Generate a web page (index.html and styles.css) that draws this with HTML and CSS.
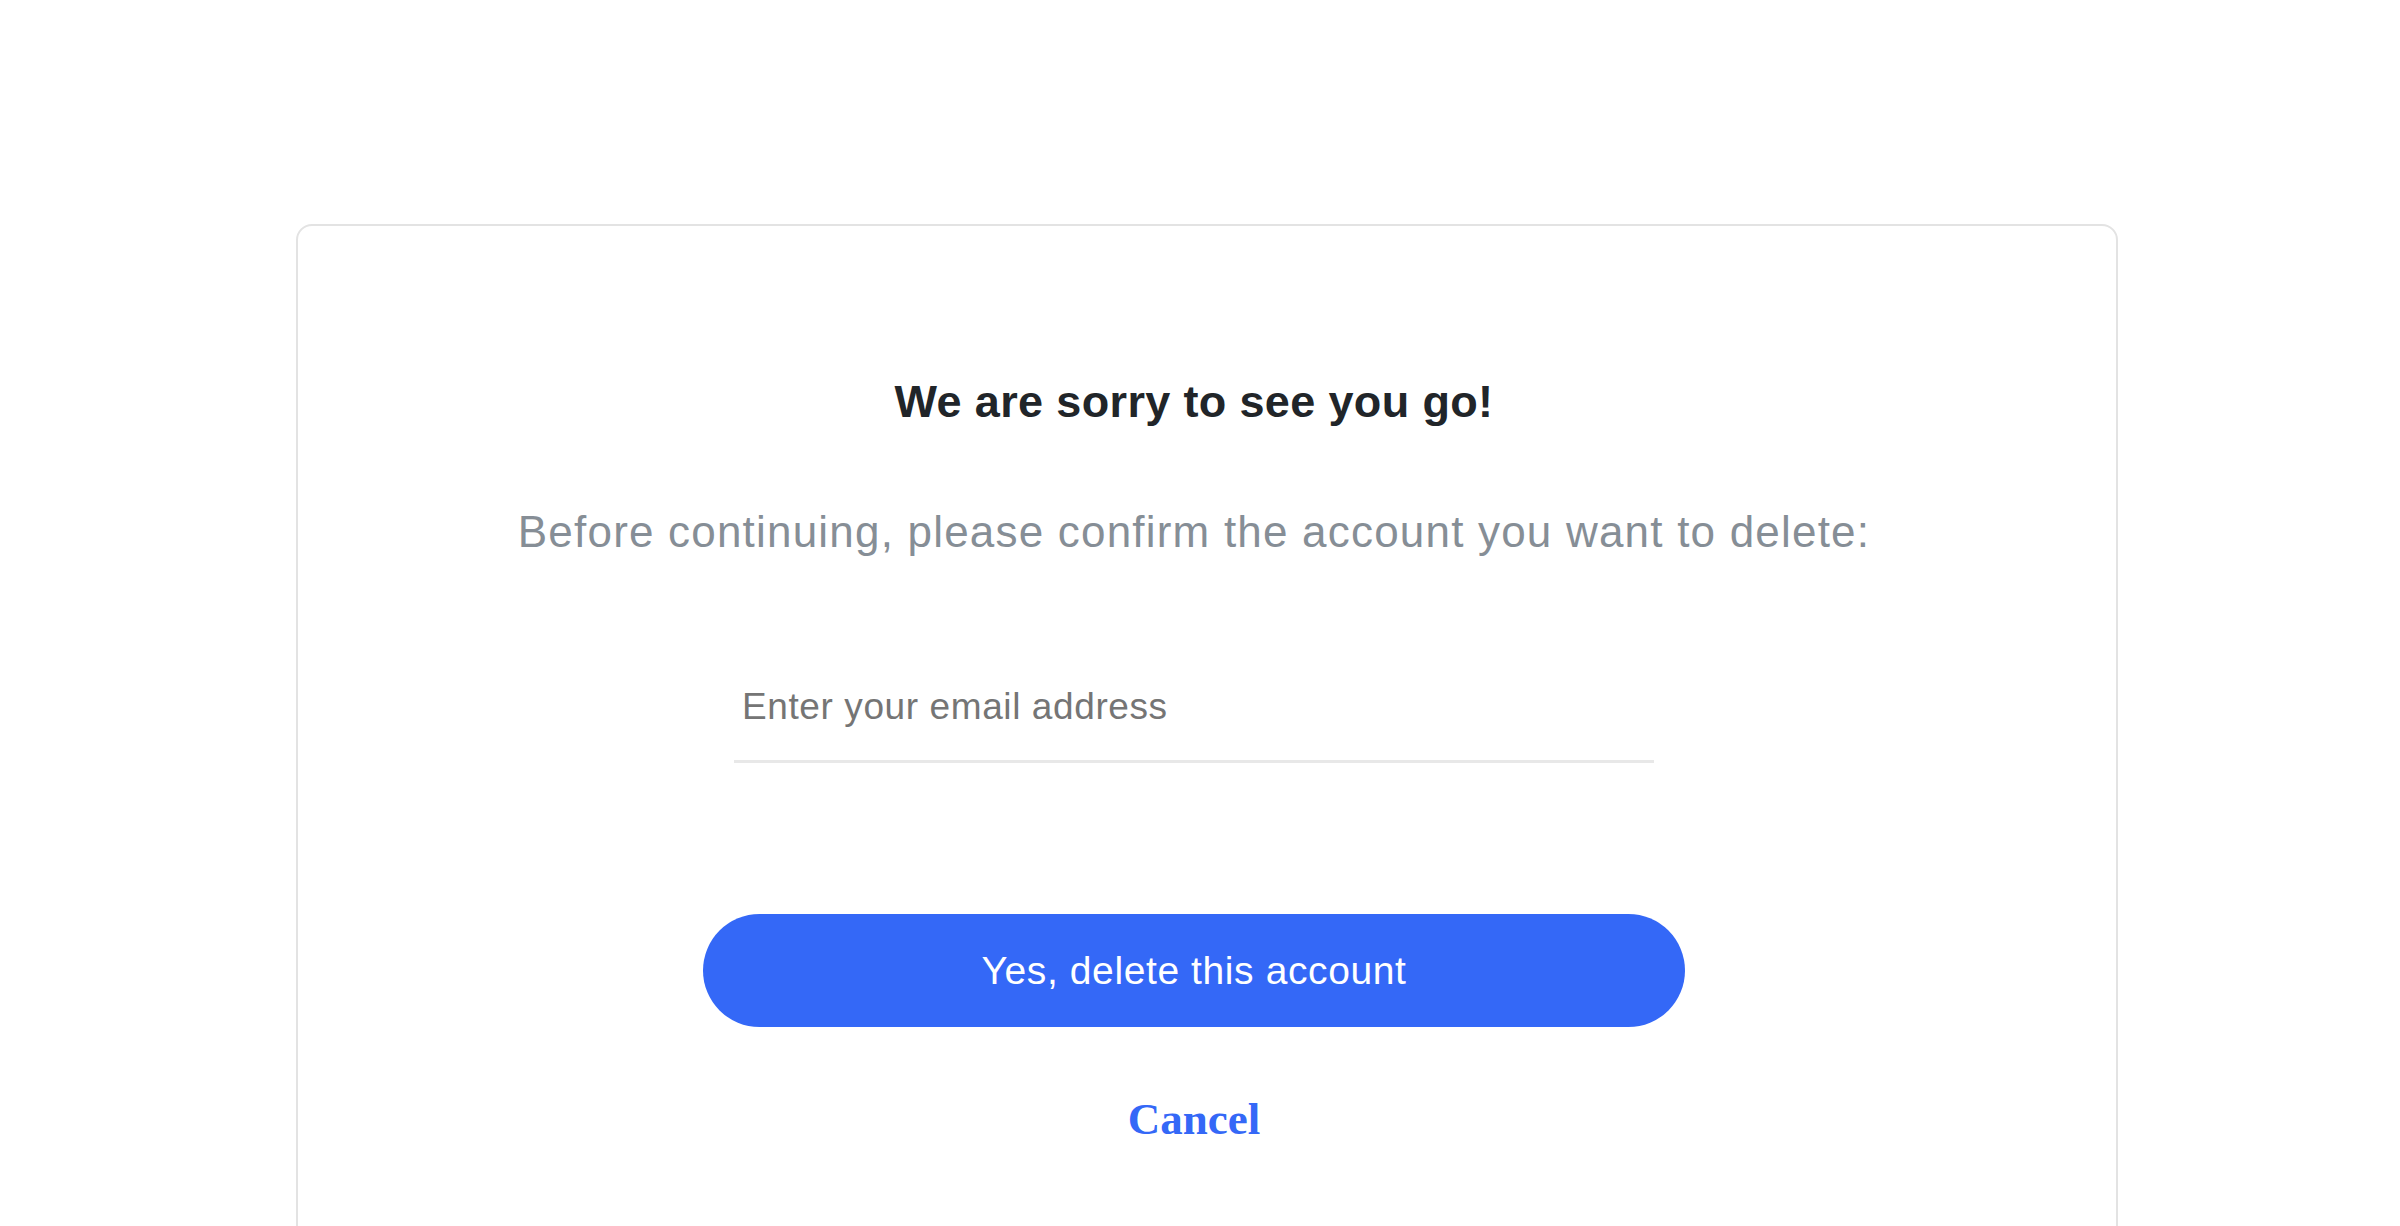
FILE: index.html
```html
<!DOCTYPE html>
<html lang="en">
<head>
<meta charset="utf-8">
<title>Delete account</title>
<link rel="stylesheet" href="styles.css">
</head>
<body>
<main class="card">
  <h1 class="title">We are sorry to see you go!</h1>
  <p class="lead">Before continuing, please confirm the account you want to delete:</p>
  <form class="form">
    <div class="field">
      <input class="email" type="email" placeholder="Enter your email address">
    </div>
    <button class="danger" type="button">Yes, delete this account</button>
    <a class="cancel" href="#">Cancel</a>
  </form>
</main>
</body>
</html>
```
FILE: styles.css
```css
html, body {
  margin: 0;
  padding: 0;
  background: #ffffff;
}
body {
  font-family: "Liberation Sans", Arial, sans-serif;
  overflow: hidden;
}
.card {
  box-sizing: border-box;
  width: 1822px;
  min-height: 1200px;
  margin: 224px 0 0 296px;
  padding: 149px 26px 0 0;
  border: 2px solid #e3e3e3;
  border-radius: 16px;
  text-align: center;
  display: flex;
  flex-direction: column;
  align-items: center;
}
.title {
  margin: 0;
  font-size: 45px;
  line-height: 54px;
  font-weight: 700;
  color: #212529;
  letter-spacing: 0.35px;
}
.lead {
  margin: 78px 0 0;
  font-size: 44px;
  line-height: 50px;
  color: #868e96;
  letter-spacing: 1.2px;
}
.form {
  display: flex;
  flex-direction: column;
  align-items: center;
  margin-top: 118px;
}
.field {
  width: 920px;
}
.email {
  display: block;
  box-sizing: border-box;
  width: 100%;
  margin: 0;
  padding: 10px 8px 31px;
  border: 0;
  border-bottom: 3px solid #e8e8e8;
  outline: none;
  font-family: "Liberation Sans", Arial, sans-serif;
  font-size: 37px;
  line-height: 44px;
  letter-spacing: 0.6px;
  color: #495057;
  background: transparent;
}
.email::placeholder {
  color: #757575;
  opacity: 1;
}
.danger {
  margin-top: 151px;
  width: 982px;
  height: 113px;
  border: 0;
  border-radius: 57px;
  background: #3468f7;
  color: #ffffff;
  font-family: "Liberation Sans", Arial, sans-serif;
  font-size: 39px;
  letter-spacing: 0.6px;
  cursor: pointer;
}
.cancel {
  margin-top: 65px;
  font-family: "Liberation Serif", "Times New Roman", serif;
  font-weight: 700;
  font-size: 45px;
  line-height: 54px;
  color: #3468f7;
  text-decoration: none;
}
```
